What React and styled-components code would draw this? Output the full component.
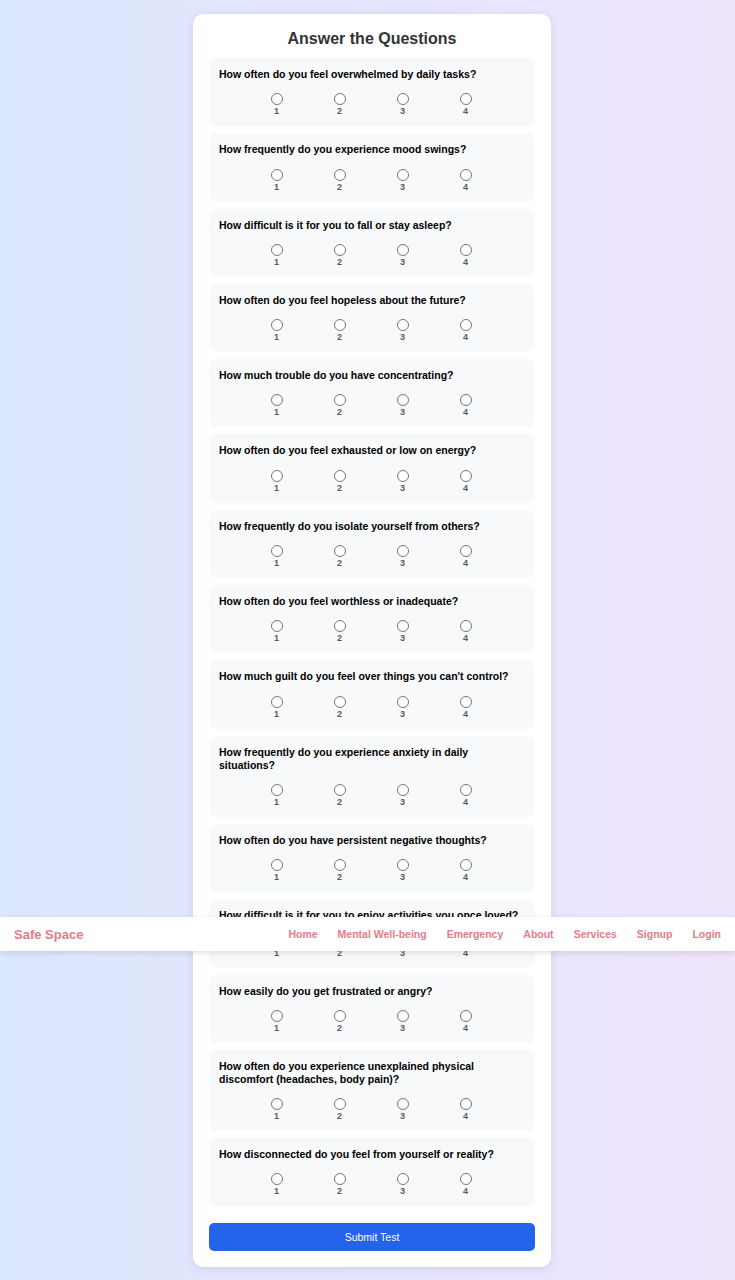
import React from 'react';
import styled, { createGlobalStyle } from 'styled-components';

const QUESTIONS = [
  'How often do you feel overwhelmed by daily tasks?',
  'How frequently do you experience mood swings?',
  'How difficult is it for you to fall or stay asleep?',
  'How often do you feel hopeless about the future?',
  'How much trouble do you have concentrating?',
  'How often do you feel exhausted or low on energy?',
  'How frequently do you isolate yourself from others?',
  'How often do you feel worthless or inadequate?',
  "How much guilt do you feel over things you can't control?",
  'How frequently do you experience anxiety in daily situations?',
  'How often do you have persistent negative thoughts?',
  'How difficult is it for you to enjoy activities you once loved?',
  'How easily do you get frustrated or angry?',
  'How often do you experience unexplained physical discomfort (headaches, body pain)?',
  'How disconnected do you feel from yourself or reality?',
];

const LINKS = ['Home', 'Mental Well-being', 'Emergency', 'About', 'Services', 'Signup', 'Login'];

const GlobalStyle = createGlobalStyle`
  * { box-sizing: border-box; }
  body {
    margin: 0;
    font-family: "Liberation Sans", Arial, sans-serif;
    background: linear-gradient(to right, #dbe7fd, #efe5fd);
    min-height: 100vh;
  }
`;

const Page = styled.div`
  position: relative;
  padding: 14px 0 13px 9px;
  display: flex;
  justify-content: center;
`;

const Card = styled.main`
  width: 358px;
  background: #fff;
  border-radius: 10px;
  box-shadow: 0 2px 10px rgba(60, 60, 120, 0.12);
  padding: 16px;
`;

const Title = styled.h1`
  margin: 0 0 10px;
  text-align: center;
  font-size: 16px;
  line-height: 18px;
  font-weight: 700;
  color: #333;
`;

const List = styled.div`
  display: flex;
  flex-direction: column;
  gap: 7px;
`;

const QuestionBox = styled.div`
  background: #f8f9fa;
  border-radius: 7px;
  padding: 10px;
`;

const QuestionText = styled.p`
  margin: 0 0 12.3px;
  font-size: 10.5px;
  line-height: 13px;
  font-weight: 700;
  color: #000;
`;

const Options = styled.div`
  display: flex;
  justify-content: center;
  gap: 50px;
  padding-right: 2px;
`;

const Option = styled.label`
  display: flex;
  flex-direction: column;
  align-items: center;
  width: 13px;
  font-size: 9px;
  line-height: 10px;
  font-weight: 700;
  color: #5a5a5a;
`;

const Radio = styled.input.attrs({ type: 'radio' })`
  width: 12px;
  height: 12px;
  margin: 0 0 1px;
`;

const SubmitButton = styled.button`
  margin-top: 17px;
  width: 100%;
  height: 28px;
  border: none;
  border-radius: 5px;
  background: #2563eb;
  color: #fff;
  font-family: "Liberation Sans", Arial, sans-serif;
  font-size: 10.5px;
`;

const NavBar = styled.nav`
  position: absolute;
  top: 917px;
  left: 0;
  right: 0;
  height: 34px;
  background: #fff;
  box-shadow: 0 2px 6px rgba(0, 0, 0, 0.12);
  display: flex;
  align-items: center;
  justify-content: space-between;
  padding: 0 14px;
`;

const Brand = styled.div`
  color: #e57b89;
  font-size: 13px;
  font-weight: 700;
`;

const NavLinks = styled.div`
  display: flex;
  gap: 20px;
`;

const NavLink = styled.a`
  color: #e57b89;
  font-size: 10.5px;
  font-weight: 700;
  text-decoration: none;
`;

export default function App() {
  return (
    <>
      <GlobalStyle />
      <Page>
        <Card>
          <Title>Answer the Questions</Title>
          <List>
            {QUESTIONS.map((q, i) => (
              <QuestionBox key={i}>
                <QuestionText>{q}</QuestionText>
                <Options>
                  {[1, 2, 3, 4].map((n) => (
                    <Option key={n}>
                      <Radio name={`q${i}`} value={n} />
                      {n}
                    </Option>
                  ))}
                </Options>
              </QuestionBox>
            ))}
          </List>
          <SubmitButton>Submit Test</SubmitButton>
        </Card>
        <NavBar>
          <Brand>Safe Space</Brand>
          <NavLinks>
            {LINKS.map((l) => (
              <NavLink key={l} href="#">{l}</NavLink>
            ))}
          </NavLinks>
        </NavBar>
      </Page>
    </>
  );
}
